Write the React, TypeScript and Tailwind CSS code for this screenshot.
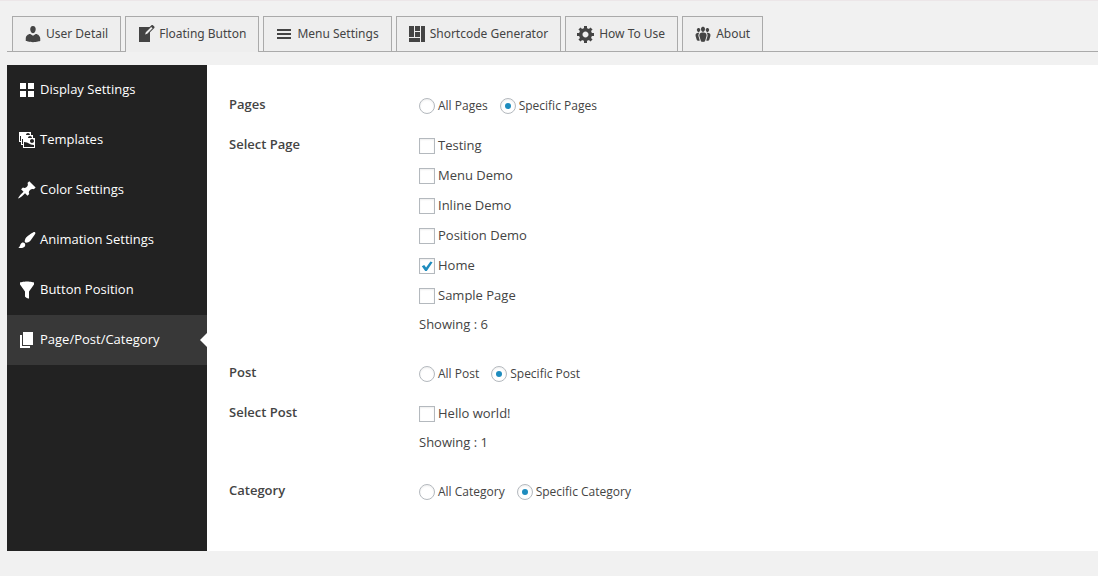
import React, { useState } from "react";
import clsx from "clsx";

interface NavItem {
  label: string;
  icon: string;
}

interface FieldRowProps {
  label: string;
  children: React.ReactNode;
}

interface RadioGroupProps {
  name: string;
  options: string[];
}

interface CheckListProps {
  items: string[];
  selected: string[];
}

const tabs: NavItem[] = [
  {
    label: "User Detail",
    icon: "M10 9.25c-2.27 0-2.73-3.44-2.73-3.44C7 4.02 7.82 2 9.97 2c2.16 0 2.98 2.02 2.71 3.81 0 0-.41 3.44-2.68 3.44zm0 2.57L12.72 10c2.39 0 4.52 2.33 4.52 4.53v2.49s-3.65 1.13-7.24 1.13c-3.65 0-7.24-1.13-7.24-1.13v-2.49c0-2.25 1.94-4.48 4.47-4.48z",
  },
  {
    label: "Floating Button",
    icon: "M16.89 1.2l1.41 1.41c.39.39.39 1.02 0 1.41L14 8.33V18H3V3h10.67l1.8-1.8c.4-.39 1.03-.4 1.42 0zm-5.66 8.48l5.37-5.36-1.42-1.42-5.36 5.37-.71 2.12z",
  },
  {
    label: "Menu Settings",
    icon: "M17 7V5H3v2h14zm0 4V9H3v2h14zm0 4v-2H3v2h14z",
  },
  {
    label: "Shortcode Generator",
    icon: "M2 2h5v11H2V2zm6 0h5v5H8V2zm6 0h4v16h-4V2zM8 8h5v5H8V8zm-6 6h11v4H2v-4z",
  },
  {
    label: "How To Use",
    icon: "M18 12h-2.18c-.17.7-.44 1.35-.81 1.93l1.54 1.54-2.1 2.1-1.54-1.54c-.58.36-1.23.63-1.91.79V19H8v-2.18c-.68-.16-1.33-.43-1.91-.79l-1.54 1.54-2.12-2.12 1.54-1.54c-.36-.58-.63-1.23-.79-1.91H1V9.03h2.17c.16-.7.44-1.35.8-1.94L2.43 5.55l2.1-2.1 1.54 1.54c.58-.37 1.24-.64 1.93-.81V2h3v2.18c.68.16 1.33.43 1.91.79l1.54-1.54 2.12 2.12-1.54 1.54c.36.59.64 1.24.8 1.94H18V12zm-8.5 1.5c1.66 0 3-1.34 3-3s-1.34-3-3-3-3 1.34-3 3 1.34 3 3 3z",
  },
  {
    label: "About",
    icon: "M8.03 4.46c-.29 1.28.55 3.46 1.97 3.46 1.41 0 2.25-2.18 1.96-3.46-.22-.98-1.08-1.63-1.96-1.63-.89 0-1.74.65-1.97 1.63zm-4.13.9c-.25 1.08.47 2.93 1.67 2.93s1.92-1.85 1.67-2.93c-.19-.83-.92-1.39-1.67-1.39s-1.48.56-1.67 1.39zm8.86 0c-.25 1.08.47 2.93 1.66 2.93 1.2 0 1.92-1.85 1.67-2.93-.19-.83-.92-1.39-1.67-1.39-.74 0-1.47.56-1.66 1.39zm-.59 11.43l1.25-4.3C14.2 10 12.71 8.47 10 8.47c-2.72 0-4.21 1.53-3.44 4.02l1.26 4.3C8.05 17.51 9 18 10 18c.98 0 1.94-.49 2.17-1.21zm-6.1-7.63c-.49.67-.96 1.83-.42 3.59l1.12 3.79c-.34.2-.77.31-1.2.31-.85 0-1.65-.41-1.85-1.03l-1.07-3.65c-.65-2.11.61-3.4 2.92-3.4.27 0 .54.02.79.06-.1.1-.2.22-.29.33zm8.35-.39c2.31 0 3.58 1.29 2.92 3.4l-1.07 3.65c-.2.62-1 1.03-1.85 1.03-.43 0-.86-.11-1.2-.31l1.11-3.77c.55-1.78.08-2.94-.42-3.61-.08-.11-.18-.23-.28-.33.25-.04.51-.06.79-.06z",
  },
];

const sections: NavItem[] = [
  {
    label: "Display Settings",
    icon: "M9 9V3H3v6h6zm8 0V3h-6v6h6zm-8 8v-6H3v6h6zm8 0v-6h-6v6h6z",
  },
  {
    label: "Templates",
    icon: "M4 15v-3H2V2h12v3h2v3h2v10H6v-3H4zm7-12c-1.1 0-2 .9-2 2h4c0-1.1-.89-2-2-2zm-7 8V6H3v5h1zm7-3h4c0-1.1-.89-2-2-2-1.1 0-2 .9-2 2zm-5 6V9H5v5h1zm9-1c1.1 0 2-.89 2-2 0-1.1-.9-2-2-2s-2 .9-2 2c0 1.11.9 2 2 2zm2 4v-2c-5 0-5-3-10-3v5h10z",
  },
  {
    label: "Color Settings",
    icon: "M10.44 3.02l1.82-1.82 6.36 6.35-1.83 1.82c-1.05-.68-2.48-.57-3.41.36l-.75.75c-.92.93-1.04 2.35-.35 3.41l-1.83 1.82-2.41-2.41-2.8 2.79c-.42.42-3.38 2.71-3.8 2.29s1.86-3.39 2.28-3.81l2.79-2.79L4.1 9.36l1.83-1.82c1.05.69 2.48.57 3.4-.36l.75-.75c.93-.92 1.05-2.35.36-3.41z",
  },
  {
    label: "Animation Settings",
    icon: "M18.33 3.57s.27-.8-.31-1.36c-.53-.52-1.22-.24-1.22-.24-.61.3-5.76 3.47-7.67 5.57-.86.96-2.06 3.79-1.09 4.82.92.98 3.96-.17 4.79-1 2.06-2.06 5.21-7.17 5.5-7.79zM1.4 17.65c2.37-1.56 1.46-3.41 3.23-4.64.93-.65 2.22-.62 3.08.29.63.67.8 2.57-.16 3.46-1.57 1.45-4 1.55-6.15.89z",
  },
  {
    label: "Button Position",
    icon: "M3 4.5v-2s3.34-1 7-1 7 1 7 1v2l-5 7.03v6.97s-1.22-.09-2.25-.59S8 16.5 8 16.5v-4.97z",
  },
  {
    label: "Page/Post/Category",
    icon: "M6 15V2h10v13H6zm-1 1h8v2H3V5h2v11z",
  },
];

const pages = ["Testing", "Menu Demo", "Inline Demo", "Position Demo", "Home", "Sample Page"];
const posts = ["Hello world!"];

const Icon: React.FC<{ path: string }> = ({ path }) => (
  <svg viewBox="0 0 20 20" className="size-5 shrink-0 fill-current" aria-hidden="true">
    <path d={path} />
  </svg>
);

const FieldRow: React.FC<FieldRowProps> = ({ label, children }) => (
  <div className="flex" role="group" aria-label={label}>
    <div className="w-[190px] shrink-0 pt-2 text-[13px] leading-5 font-semibold">{label}</div>
    {children}
  </div>
);

const RadioGroup: React.FC<RadioGroupProps> = ({ name, options }) => {
  const [value, setValue] = useState(options[1]);

  return (
    <div className="flex h-10 items-center gap-3 text-xs">
      {options.map((option) => (
        <label key={option} className="flex items-center gap-[3px]">
          <input
            type="radio"
            name={name}
            checked={value === option}
            onChange={() => setValue(option)}
            className="flex size-4 appearance-none items-center justify-center rounded-full border border-[#b4b9be] bg-white shadow-[inset_0_1px_2px_rgba(0,0,0,0.07)] checked:before:size-1.5 checked:before:rounded-full checked:before:bg-[#1e8cbe]"
          />
          {option}
        </label>
      ))}
    </div>
  );
};

const CheckList: React.FC<CheckListProps> = ({ items, selected }) => (
  <div className="pt-[5px] pb-[17px] text-[13px]">
    {items.map((item) => (
      <label key={item} className="flex h-[30px] items-center gap-[3px]">
        <span className="relative flex">
          <input
            type="checkbox"
            defaultChecked={selected.includes(item)}
            className="peer size-4 appearance-none border border-[#b4b9be] bg-white shadow-[inset_0_1px_2px_rgba(0,0,0,0.07)]"
          />
          <svg
            viewBox="0 0 16 16"
            className="pointer-events-none absolute inset-0 hidden size-4 fill-[#1e8cbe] peer-checked:block"
            aria-hidden="true"
          >
            <path d="M2.8 8.2 5.2 7l1.9 2.6L11.4 3.4 13.6 4.2 7.8 13H6.2z" />
          </svg>
        </span>
        {item}
      </label>
    ))}
    <p className="leading-[26px]">Showing : {items.length}</p>
  </div>
);

const App: React.FC = () => {
  const [activeTab, setActiveTab] = useState("Floating Button");
  const [activeSection, setActiveSection] = useState("Page/Post/Category");

  return (
    <div className="min-h-screen border-t border-[#ece6e8] bg-[#f1f1f1] pl-[7px] font-['Open_Sans','Noto_Sans',sans-serif] text-[13px] text-[#444]">
      {/* Top tabs */}
      <nav className="flex gap-1 border-b border-[#aaa] pt-[15px] pl-[5px] font-['Noto_Sans',sans-serif] text-xs">
        {tabs.map((tab) => (
          <a
            key={tab.label}
            href="#"
            onClick={() => setActiveTab(tab.label)}
            className={clsx(
              "flex items-center gap-[3px] border border-b-0 border-[#aaa] bg-[#eee] pr-3 pl-2.5 whitespace-nowrap",
              activeTab === tab.label ? "-mb-px h-9 pb-px" : "h-[35px]"
            )}
          >
            <Icon path={tab.icon} />
            {tab.label}
          </a>
        ))}
      </nav>

      <div className="mt-[13px] flex bg-white">
        {/* Sidebar */}
        <nav className="w-[200px] shrink-0 bg-[#222] text-white">
          {sections.map((section) => (
            <a
              key={section.label}
              href="#"
              onClick={() => setActiveSection(section.label)}
              className={clsx(
                "relative flex h-[50px] items-center gap-[3px] px-2.5",
                activeSection === section.label && "bg-[#383838]"
              )}
            >
              <Icon path={section.icon} />
              {section.label}
              {activeSection === section.label && (
                <span className="absolute top-1/2 right-0 -translate-y-1/2 border-y-[7px] border-r-[7px] border-y-transparent border-r-white"></span>
              )}
            </a>
          ))}
        </nav>

        {/* Visibility settings */}
        <main className="flex-1 px-[22px] pt-[21px] pb-[39px]">
          <FieldRow label="Pages">
            <RadioGroup name="pages" options={["All Pages", "Specific Pages"]} />
          </FieldRow>
          <FieldRow label="Select Page">
            <CheckList items={pages} selected={["Home"]} />
          </FieldRow>
          <FieldRow label="Post">
            <RadioGroup name="post" options={["All Post", "Specific Post"]} />
          </FieldRow>
          <FieldRow label="Select Post">
            <CheckList items={posts} selected={[]} />
          </FieldRow>
          <FieldRow label="Category">
            <RadioGroup name="category" options={["All Category", "Specific Category"]} />
          </FieldRow>
        </main>
      </div>
    </div>
  );
};

export default App;
